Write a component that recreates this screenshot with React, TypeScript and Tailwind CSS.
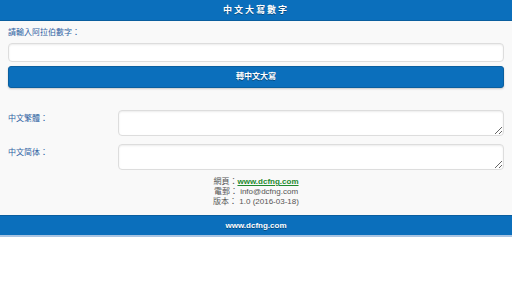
import React from 'react';

const cjk = '"Liberation Sans", Arial, "Noto Sans CJK TC", sans-serif';

export default function App() {
    return (
        <div className="w-[512px] bg-white" style={{ fontFamily: cjk }}>
            <div className="h-[21px] bg-[#0b6fbc] flex items-center justify-center border-b border-[#0a5e9f]">
                <h1 className="text-white text-[9px] leading-[10px] font-bold tracking-[2px] [text-shadow:0_1px_0_#05497d]">
                    中文大寫數字
                </h1>
            </div>

            <div className="bg-[#f9f9f9] px-2 pt-[7px] pb-[8px]">
                <label className="block h-[10px] text-[8px] leading-[10px] text-[#2f62a3] mb-[5px]">
                    請輸入阿拉伯數字：
                </label>
                <input
                    type="text"
                    className="block w-full h-[19px] bg-white border border-[#dddddd] rounded-[4px] shadow-[inset_0_1px_2px_rgba(0,0,0,0.08)] outline-none"
                />
                <button className="block mt-[4px] w-full h-[22px] leading-[10px] bg-[#0b6fbc] border border-[#0a5f9f] rounded-[3px] text-white text-[8px] font-bold shadow-[0_1px_2px_rgba(0,0,0,0.2)] [text-shadow:0_1px_0_#05497d]">
                    轉中文大寫
                </button>

                <div className="mt-[22px] flex flex-col gap-[8px]">
                    <div className="flex items-start h-[26px]">
                        <label className="w-[110px] pt-[4px] text-[8px] leading-[10px] text-[#2f62a3]">中文繁體：</label>
                        <textarea className="block flex-1 h-[26px] bg-white border border-[#dddddd] rounded-[4px] shadow-[inset_0_1px_2px_rgba(0,0,0,0.08)] outline-none" />
                    </div>
                    <div className="flex items-start h-[26px]">
                        <label className="w-[110px] pt-[4px] text-[8px] leading-[10px] text-[#2f62a3]">中文简体：</label>
                        <textarea className="block flex-1 h-[26px] bg-white border border-[#dddddd] rounded-[4px] shadow-[inset_0_1px_2px_rgba(0,0,0,0.08)] outline-none" />
                    </div>
                </div>

                <div className="mt-[7px] text-center text-[8px] leading-[10px] text-[#555555]">
                    <div>
                        網頁：<a className="text-[#1f8a2e] font-bold underline">www.dcfng.com</a>
                    </div>
                    <div>電郵： info@dcfng.com</div>
                    <div>版本： 1.0 (2016-03-18)</div>
                </div>
            </div>

            <div className="h-[22px] bg-[#0b6fbc] border-t border-[#0a5e9f] border-b-2 border-b-[#a9c4e2] flex items-center justify-center">
                <span className="text-white text-[8px] leading-[10px] font-bold [text-shadow:0_1px_0_#05497d]">www.dcfng.com</span>
            </div>
        </div>
    );
}
